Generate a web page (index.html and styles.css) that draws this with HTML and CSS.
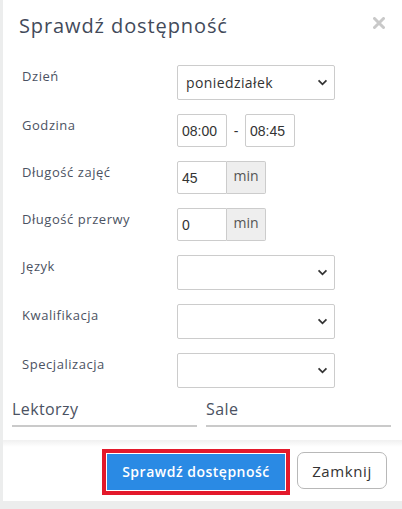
FILE: index.html
```html
<!DOCTYPE html>
<html lang="pl">
<head>
<meta charset="utf-8">
<link rel="stylesheet" href="styles.css">
</head>
<body>
<div class="modal">
  <div class="header">
    <h1 class="title">Sprawdź dostępność</h1>
    <svg class="close" viewBox="0 0 12 12" width="12" height="12"><path d="M1.5 1.5 L10.5 10.5 M10.5 1.5 L1.5 10.5" stroke="#c9c9c9" stroke-width="3" stroke-linecap="round"/></svg>
  </div>
  <div class="body">
    <div class="row sel">
      <label class="lbl">Dzień</label>
      <div class="select wide"><span class="val">poniedziałek</span><svg class="chev" viewBox="0 0 12 8" width="11" height="7"><path d="M1.5 1.5 L6 6 L10.5 1.5" fill="none" stroke="#333" stroke-width="2"/></svg></div>
    </div>
    <div class="row">
      <label class="lbl">Godzina</label>
      <div class="times">
        <div class="input small">08:00</div>
        <span class="dash">-</span>
        <div class="input small">08:45</div>
      </div>
    </div>
    <div class="row">
      <label class="lbl">Długość zajęć</label>
      <div class="group"><div class="input small">45</div><div class="addon">min</div></div>
    </div>
    <div class="row">
      <label class="lbl">Długość przerwy</label>
      <div class="group"><div class="input small">0</div><div class="addon">min</div></div>
    </div>
    <div class="row sel">
      <label class="lbl">Język</label>
      <div class="select wide"><span class="val"></span><svg class="chev" viewBox="0 0 12 8" width="11" height="7"><path d="M1.5 1.5 L6 6 L10.5 1.5" fill="none" stroke="#333" stroke-width="2"/></svg></div>
    </div>
    <div class="row sel">
      <label class="lbl">Kwalifikacja</label>
      <div class="select wide"><span class="val"></span><svg class="chev" viewBox="0 0 12 8" width="11" height="7"><path d="M1.5 1.5 L6 6 L10.5 1.5" fill="none" stroke="#333" stroke-width="2"/></svg></div>
    </div>
    <div class="row sel last">
      <label class="lbl">Specjalizacja</label>
      <div class="select wide"><span class="val"></span><svg class="chev" viewBox="0 0 12 8" width="11" height="7"><path d="M1.5 1.5 L6 6 L10.5 1.5" fill="none" stroke="#333" stroke-width="2"/></svg></div>
    </div>
    <div class="lists">
      <div class="list">Lektorzy</div>
      <div class="list">Sale</div>
    </div>
  </div>
  <div class="footer">
    <div class="focus"><button class="btn primary">Sprawdź dostępność</button></div>
    <button class="btn secondary">Zamknij</button>
  </div>
</div>
</body>
</html>
```
FILE: styles.css
```css
* { box-sizing: border-box; }
html, body { margin: 0; padding: 0; }
body {
  background: #eceded;
  font-family: "Open Sans", "DejaVu Sans", sans-serif;
  width: 402px;
  height: 509px;
  overflow: hidden;
}
.modal {
  margin-left: 3px;
  width: 402px;
  height: 501px;
  background: #fff;
  display: flex;
  flex-direction: column;
}
.header {
  display: flex;
  align-items: center;
  justify-content: space-between;
  padding: 6px 20px 0 16px;
  height: 44px;
}
.title {
  margin: 0;
  font-size: 20px;
  font-weight: 400;
  color: #424a5a;
  letter-spacing: 0.9px;
}
.close { margin-bottom: 4px; }
.body {
  padding: 21px 0 0 9px;
  flex: 1;
}
.row {
  display: flex;
  align-items: flex-start;
  height: 47px;
  padding-left: 10px;
}
.row.sel { height: 49px; }
.row.last { height: 45px; }
.lbl {
  width: 155px;
  font-size: 13px;
  color: #4b5262;
  padding-top: 2px;
  line-height: 18px;
  letter-spacing: 0.55px;
}
.select {
  height: 35px;
  border: 1px solid #ccc;
  border-radius: 2px;
  display: flex;
  align-items: center;
  justify-content: space-between;
  padding: 0 4px 0 8px;
  font-size: 14px;
  letter-spacing: 0.4px;
  color: #333;
}
.select.wide { width: 158px; }
.chev { margin-right: 2px; }
.times { display: flex; align-items: center; }
.dash { width: 18px; text-align: center; font-family: "Liberation Sans", sans-serif; color: #333; font-size: 14px; }
.input {
  height: 33px;
  border: 1px solid #ccc;
  border-radius: 2px;
  display: flex;
  align-items: center;
  padding: 0 4px;
  font-family: "Liberation Sans", Arial, sans-serif;
  font-size: 14px;
  color: #333;
}
.input.small { width: 50px; }
.group { display: flex; }
.group .input { border-radius: 2px 0 0 2px; }
.addon {
  height: 33px;
  width: 39px;
  background: #eee;
  border: 1px solid #ccc;
  border-left: none;
  border-radius: 0 2px 2px 0;
  font-size: 14px;
  color: #555;
  text-align: center;
  padding-top: 4px;
}
.lists {
  display: flex;
  gap: 9px;
}
.list {
  width: 185px;
  font-size: 16px;
  color: #4b5262;
  letter-spacing: 0.4px;
  padding-bottom: 5px;
  border-bottom: 2px solid #cacaca;
}
.footer {
  height: 61px;
  display: flex;
  align-items: center;
  justify-content: flex-end;
  gap: 7px;
  padding-right: 18px;
  background: linear-gradient(#f0f0f0, #fff 7px);
}
.focus {
  border: 4px solid #e3192b;
  padding: 1px;
  display: flex;
  margin-top: 2px;
}
.btn {
  font-family: "Open Sans", "DejaVu Sans", sans-serif;
  font-size: 14px;
  cursor: pointer;
}
.primary {
  background: #2a8ae4;
  color: #fff;
  border: none;
  width: 178px;
  height: 36px;
  font-weight: 600;
  letter-spacing: 0.5px;
}
.secondary {
  background: #fff;
  color: #333;
  border: 1px solid #b8b8b8;
  border-radius: 7px;
  width: 90px;
  height: 37px;
  font-weight: 500;
  font-size: 15px;
  letter-spacing: 0.6px;
}
```
